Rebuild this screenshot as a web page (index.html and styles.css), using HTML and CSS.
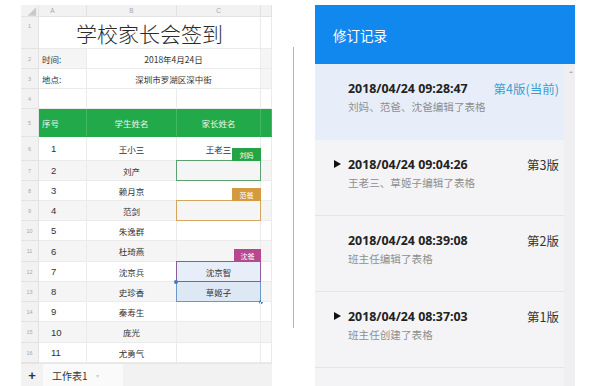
FILE: index.html
```html
<!DOCTYPE html>
<html lang="zh">
<head>
<meta charset="utf-8">
<title>修订记录</title>
<link rel="stylesheet" href="styles.css">
</head>
<body>
<div class="page">
  <div class="sheet">
    <div class="grid">
      <div class="corner"><svg width="18" height="12" viewBox="0 0 18 12"><polygon points="16,2 16,11 7,11" fill="#c9c9c9"/></svg></div>
      <div class="colh colh-a">A</div>
      <div class="colh">B</div>
      <div class="colh">C</div>
      <div class="colh"></div>

      <div class="rn rn-top">1</div>
      <div class="cell title span3">学校家长会签到</div>
      <div class="cell"></div>

      <div class="rn">2</div>
      <div class="cell shade lbl">时间:</div>
      <div class="cell span2 center">2018年4月24日</div>
      <div class="cell shade"></div>

      <div class="rn">3</div>
      <div class="cell lbl">地点:</div>
      <div class="cell span2 center">深圳市罗湖区深中街</div>
      <div class="cell shade"></div>

      <div class="rn">4</div>
      <div class="cell"></div><div class="cell"></div><div class="cell"></div><div class="cell"></div>

      <div class="rn">5</div>
      <div class="cell green lbl">序号</div>
      <div class="cell green center">学生姓名</div>
      <div class="cell green center">家长姓名</div>
      <div class="cell green"></div>

      <div class="rn">6</div>
      <div class="cell num">1</div>
      <div class="cell center">王小三</div>
      <div class="cell center">王老三</div>
      <div class="cell"></div>

      <div class="rn">7</div>
      <div class="cell shade num">2</div>
      <div class="cell shade center">刘产</div>
      <div class="cell shade mark mark-green"><span class="tag tag-green">刘妈</span></div>
      <div class="cell shade"></div>

      <div class="rn">8</div>
      <div class="cell num">3</div>
      <div class="cell center">赖月京</div>
      <div class="cell"></div>
      <div class="cell"></div>

      <div class="rn">9</div>
      <div class="cell shade num">4</div>
      <div class="cell shade center">范剑</div>
      <div class="cell shade mark mark-gold"><span class="tag tag-gold">范爸</span></div>
      <div class="cell shade"></div>

      <div class="rn">10</div>
      <div class="cell num">5</div>
      <div class="cell center">朱逸群</div>
      <div class="cell"></div>
      <div class="cell"></div>

      <div class="rn">11</div>
      <div class="cell shade num">6</div>
      <div class="cell shade center">杜琦燕</div>
      <div class="cell shade"></div>
      <div class="cell shade"></div>

      <div class="rn">12</div>
      <div class="cell num">7</div>
      <div class="cell center">沈京兵</div>
      <div class="cell center mark mark-purple"><span class="tag tag-purple">沈爸</span>沈京智</div>
      <div class="cell"></div>

      <div class="rn">13</div>
      <div class="cell shade num">8</div>
      <div class="cell shade center">史珍香</div>
      <div class="cell center mark mark-blue"><span class="dot dot-tl"></span>草姬子<span class="dot dot-br"></span></div>
      <div class="cell shade"></div>

      <div class="rn">14</div>
      <div class="cell num">9</div>
      <div class="cell center">秦寿生</div>
      <div class="cell"></div>
      <div class="cell"></div>

      <div class="rn">15</div>
      <div class="cell shade num">10</div>
      <div class="cell shade center">庞光</div>
      <div class="cell shade"></div>
      <div class="cell shade"></div>

      <div class="rn">16</div>
      <div class="cell num">11</div>
      <div class="cell center">尤勇气</div>
      <div class="cell"></div>
      <div class="cell"></div>
    </div>
    <div class="tabs">
      <div class="tab-add">+</div>
      <div class="tab">工作表1<span class="tab-arrow">▾</span></div>
      <div class="tab-rest"></div>
    </div>
  </div>

  <div class="divider"></div>

  <div class="panel">
    <div class="panel-head">修订记录</div>
    <div class="panel-body">
      <div class="list">
        <div class="rev current">
          <div class="rev-line"><span class="caret-slot"></span><span class="time">2018/04/24 09:28:47</span><span class="ver ver-current">第4版(当前)</span></div>
          <div class="rev-sub">刘妈、范爸、沈爸编辑了表格</div>
        </div>
        <div class="rev">
          <div class="rev-line"><span class="caret-slot"><span class="caret"></span></span><span class="time">2018/04/24 09:04:26</span><span class="ver">第3版</span></div>
          <div class="rev-sub">王老三、草姬子编辑了表格</div>
        </div>
        <div class="rev">
          <div class="rev-line"><span class="caret-slot"></span><span class="time">2018/04/24 08:39:08</span><span class="ver">第2版</span></div>
          <div class="rev-sub">班主任编辑了表格</div>
        </div>
        <div class="rev">
          <div class="rev-line"><span class="caret-slot"><span class="caret"></span></span><span class="time">2018/04/24 08:37:03</span><span class="ver">第1版</span></div>
          <div class="rev-sub">班主任创建了表格</div>
        </div>
        <div class="rev"></div>
      </div>
      <div class="scrollbar"><span class="scroll-up"></span></div>
    </div>
  </div>
</div>
</body>
</html>
```

FILE: styles.css
```css
* { box-sizing: border-box; }
html, body { margin: 0; padding: 0; background: #ffffff; }
body { font-family: "Noto Sans CJK SC", "Noto Sans", sans-serif; color: #333; }

.page {
  display: flex;
  align-items: flex-start;
  padding: 5px 0 0 21px;
  height: 386px;
  overflow: hidden;
}

/* ---------- spreadsheet ---------- */
.sheet {
  width: 251px;
  display: flex;
  flex-direction: column;
}
.grid {
  display: grid;
  grid-template-columns: 18px 48px 90px 84px 11px;
  grid-template-rows: 12px 32px 20px 20px 20px 28px 24px 20px 20px 20px 20px 21px 20px 20px 20px 21px 20px;
  background: #fff;
}
.corner, .colh, .rn {
  background: #f2f2f2;
  border-right: 1px solid #e2e2e2;
  border-bottom: 1px solid #e2e2e2;
  color: #a8a8a8;
  font-family: "Liberation Sans", sans-serif;
}
.corner { display: flex; }
.colh {
  display: flex;
  align-items: center;
  justify-content: center;
  font-size: 6.5px;
}
.colh-a { padding-right: 20px; }
.rn {
  display: flex;
  align-items: center;
  justify-content: center;
  font-size: 5.5px;
}
.rn-top { align-items: flex-start; padding-top: 6px; }

.cell {
  position: relative;
  display: flex;
  align-items: center;
  border-right: 1px solid #ebebeb;
  border-bottom: 1px solid #ebebeb;
  font-size: 8.5px;
  color: #333;
  white-space: nowrap;
}
.shade { background: #f5f5f5; }
.span2 { grid-column: span 2; }
.span3 { grid-column: span 3; }
.center { justify-content: center; }
.lbl { padding-left: 3px; }
.num { padding-left: 12px; font-size: 9.5px; font-family: "Liberation Sans", sans-serif; }
.title {
  justify-content: center;
  font-size: 21px;
  font-weight: 300;
  color: #2a2a2a;
  padding-top: 1px;
}
.green {
  background: #22a94a;
  color: #eaf7ee;
  border-right-color: #43b865;
  border-bottom-color: #22a94a;
}

.mark { border: 1px solid; margin: -1px 0 0 -1px; }
.mark-green { border-color: #5e9f70; }
.mark-gold { border-color: #d2a65e; }
.mark-purple { border-color: #8d5c9e; background: #e7eefa; }
.mark-blue { border-color: #6b98c9; background: #dde8f5; margin-top: 0; border-top: none; }

.tag {
  position: absolute;
  right: -1px;
  bottom: 100%;
  width: 29px;
  height: 13px;
  display: flex;
  align-items: center;
  justify-content: center;
  font-size: 7px;
  color: #fff;
}
.tag-green { background: #25a446; }
.tag-gold { background: #d39b3e; }
.tag-purple { background: #b7478f; width: 27px; }

.dot {
  position: absolute;
  width: 4px;
  height: 4px;
  border-radius: 50%;
  background: #3d7cc4;
}
.dot-tl { left: -3px; top: -2px; }
.dot-br { right: -3px; bottom: -3px; }

.tabs {
  display: flex;
  height: 23px;
  background: #f2f2f2;
  border-top: 1px solid #e6e6e6;
}
.tab-add {
  width: 22px;
  display: flex;
  align-items: center;
  justify-content: center;
  font-family: "Liberation Sans", sans-serif;
  font-size: 13px;
  font-weight: bold;
  color: #333;
}
.tab {
  width: 80px;
  display: flex;
  align-items: center;
  padding-left: 9px;
  background: #fafafa;
  font-size: 10px;
  color: #333;
}
.tab-arrow { font-size: 6px; color: #ccc; margin-left: 8px; }
.tab-rest { flex: 1; }

/* ---------- divider ---------- */
.divider {
  width: 1px;
  height: 281px;
  margin: 42px 0 0 21px;
  background: #b5b5b5;
}

/* ---------- revision panel ---------- */
.panel {
  width: 260px;
  height: 381px;
  margin-left: 21px;
  display: flex;
  flex-direction: column;
  background: #f4f4f6;
  overflow: hidden;
}
.panel-head {
  flex: 0 0 59px;
  height: 59px;
  background: #1188ee;
  color: #fff;
  font-size: 13.5px;
  padding: 20px 0 0 18px;
  line-height: 20px;
}
.panel-body { flex: 1 1 auto; display: flex; min-height: 0; overflow: hidden; }
.list { flex: 1; }
.scrollbar {
  width: 11px;
  background: #efeff1;
  position: relative;
}
.scroll-up {
  position: absolute;
  left: 5px;
  top: 7px;
  border-left: 2px solid transparent;
  border-right: 2px solid transparent;
  border-bottom: 2px solid #b0b0b0;
}

.rev {
  height: 76px;
  padding: 15px 5px 0 19px;
  border-bottom: 1px solid #e4e4e7;
}
.rev.current { background: #e8eef9; border-bottom-color: #e8eef9; }
.rev-line {
  display: flex;
  align-items: center;
  height: 18px;
}
.caret-slot { width: 14px; display: flex; align-items: center; }
.caret {
  width: 0;
  height: 0;
  border-left: 7px solid #111;
  border-top: 4.5px solid transparent;
  border-bottom: 4.5px solid transparent;
}
.time {
  flex: 1;
  font-family: "Open Sans", "Liberation Sans", sans-serif;
  font-weight: 700;
  font-size: 12.4px;
  color: #222;
}
.ver { font-size: 12.5px; color: #333; }
.ver-current { color: #3b9fd3; }
.rev-sub {
  margin: 3px 0 0 14px;
  font-size: 10.6px;
  line-height: 14px;
  color: #8f8f8f;
}
```
